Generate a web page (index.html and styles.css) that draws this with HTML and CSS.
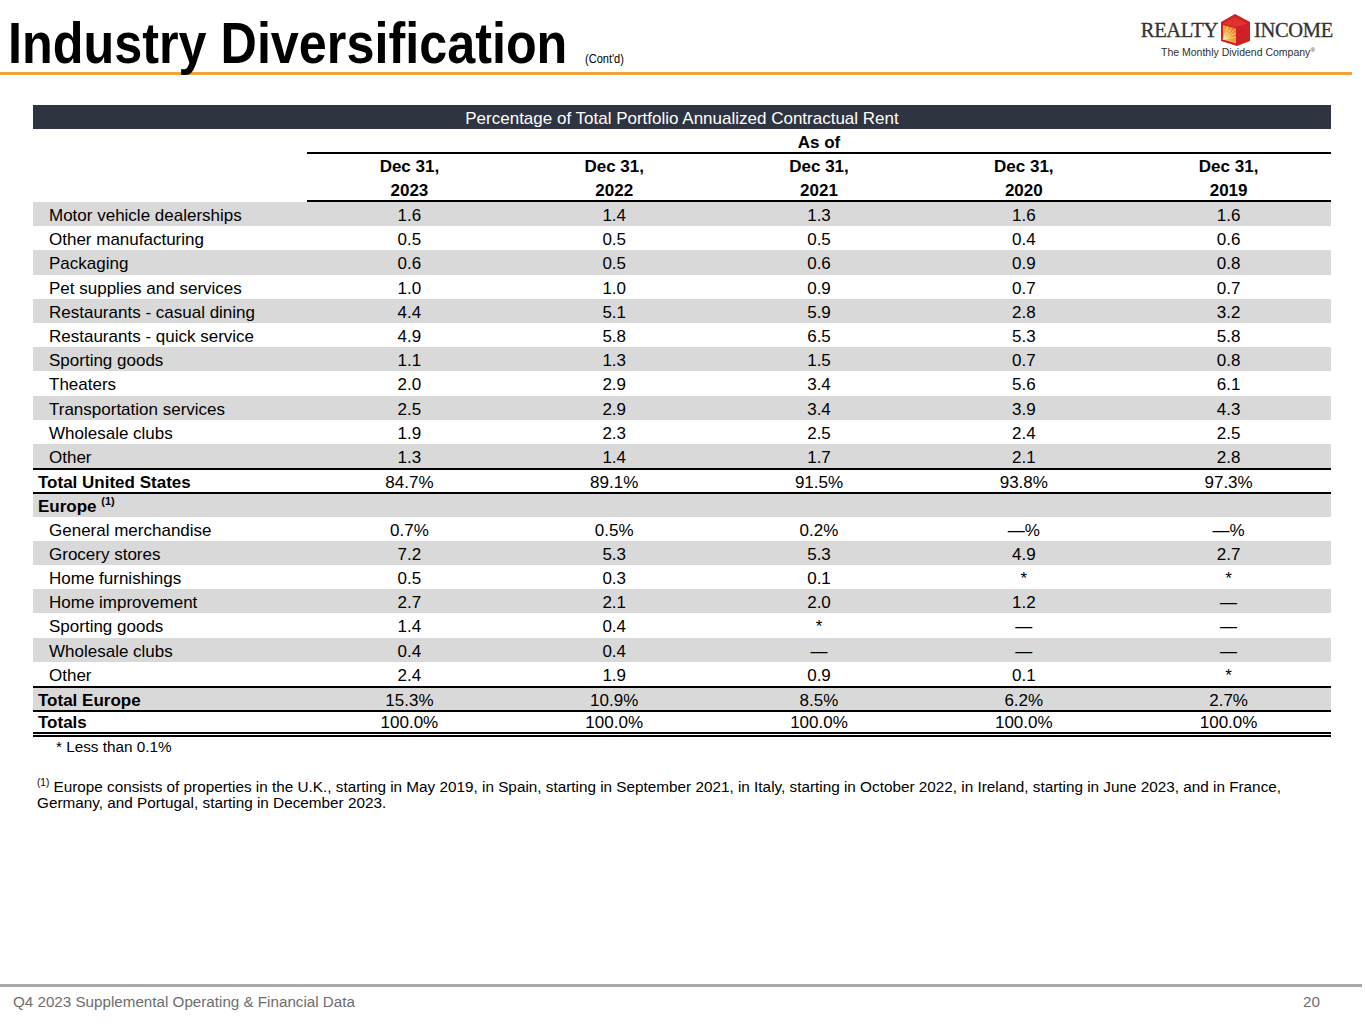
FILE: index.html
```html
<!DOCTYPE html>
<html lang="en">
<head>
<meta charset="utf-8">
<title>Industry Diversification (Cont'd)</title>
<link rel="stylesheet" href="styles.css">
</head>
<body>
<div class="page">
  <header class="top">
    <h1 class="title"><span class="title-text">Industry Diversification</span><span class="contd">(Cont'd)</span></h1>
    <div class="logo">
      <div class="logo-line">
        <span class="logo-word">REALTY</span>
        <svg class="logo-icon" width="30" height="32" viewBox="0 0 30 32" aria-hidden="true">
          <defs>
            <linearGradient id="face" x1="0" y1="1" x2="1" y2="0">
              <stop offset="0" stop-color="#f9d46a"/>
              <stop offset="0.55" stop-color="#f29a2e"/>
              <stop offset="1" stop-color="#e2541f"/>
            </linearGradient>
          </defs>
          <polygon points="15,0 30,8 30,27 17,32 1,27 1,8" fill="#cf2027"/>
          <polygon points="15,3 27,9.5 16,13 3,9.5" fill="#e0332c"/>
          <polygon points="3,11 16,14.5 16,29.5 3,25.5" fill="url(#face)"/>
          <g stroke="#fff3c8" stroke-width="0.7" opacity="0.9">
            <line x1="3" y1="25.5" x2="16" y2="15"/>
            <line x1="3" y1="25.5" x2="16" y2="19"/>
            <line x1="3" y1="25.5" x2="16" y2="23"/>
            <line x1="3" y1="25.5" x2="12" y2="13.5"/>
            <line x1="3" y1="25.5" x2="8" y2="12.5"/>
          </g>
        </svg>
        <span class="logo-word logo-word-right">INCOME</span>
      </div>
      <div class="tagline">The Monthly Dividend Company<sup>®</sup></div>
    </div>
  </header>

  <main class="content">
    <table class="rent">
      <colgroup>
        <col class="c-label">
        <col><col><col><col><col>
      </colgroup>
      <thead>
        <tr class="band"><th colspan="6">Percentage of Total Portfolio Annualized Contractual Rent</th></tr>
        <tr class="asof"><th class="blank"></th><th colspan="5" class="ruled">As of</th></tr>
        <tr class="dec"><th class="blank"></th><th>Dec 31,</th><th>Dec 31,</th><th>Dec 31,</th><th>Dec 31,</th><th>Dec 31,</th></tr>
        <tr class="yr"><th class="blank"></th><th>2023</th><th>2022</th><th>2021</th><th>2020</th><th>2019</th></tr>
      </thead>
      <tbody>
        <tr class="g"><td class="lbl">Motor vehicle dealerships</td><td>1.6</td><td>1.4</td><td>1.3</td><td>1.6</td><td>1.6</td></tr>
        <tr><td class="lbl">Other manufacturing</td><td>0.5</td><td>0.5</td><td>0.5</td><td>0.4</td><td>0.6</td></tr>
        <tr class="g"><td class="lbl">Packaging</td><td>0.6</td><td>0.5</td><td>0.6</td><td>0.9</td><td>0.8</td></tr>
        <tr><td class="lbl">Pet supplies and services</td><td>1.0</td><td>1.0</td><td>0.9</td><td>0.7</td><td>0.7</td></tr>
        <tr class="g"><td class="lbl">Restaurants - casual dining</td><td>4.4</td><td>5.1</td><td>5.9</td><td>2.8</td><td>3.2</td></tr>
        <tr><td class="lbl">Restaurants - quick service</td><td>4.9</td><td>5.8</td><td>6.5</td><td>5.3</td><td>5.8</td></tr>
        <tr class="g"><td class="lbl">Sporting goods</td><td>1.1</td><td>1.3</td><td>1.5</td><td>0.7</td><td>0.8</td></tr>
        <tr><td class="lbl">Theaters</td><td>2.0</td><td>2.9</td><td>3.4</td><td>5.6</td><td>6.1</td></tr>
        <tr class="g"><td class="lbl">Transportation services</td><td>2.5</td><td>2.9</td><td>3.4</td><td>3.9</td><td>4.3</td></tr>
        <tr><td class="lbl">Wholesale clubs</td><td>1.9</td><td>2.3</td><td>2.5</td><td>2.4</td><td>2.5</td></tr>
        <tr class="g"><td class="lbl">Other</td><td>1.3</td><td>1.4</td><td>1.7</td><td>2.1</td><td>2.8</td></tr>
        <tr class="ruled-top"><td class="lbl strong">Total United States</td><td>84.7%</td><td>89.1%</td><td>91.5%</td><td>93.8%</td><td>97.3%</td></tr>
        <tr class="g ruled-top"><td class="lbl strong">Europe <sup class="fn">(1)</sup></td><td></td><td></td><td></td><td></td><td></td></tr>
        <tr><td class="lbl">General merchandise</td><td>0.7%</td><td>0.5%</td><td>0.2%</td><td>—%</td><td>—%</td></tr>
        <tr class="g"><td class="lbl">Grocery stores</td><td>7.2</td><td>5.3</td><td>5.3</td><td>4.9</td><td>2.7</td></tr>
        <tr><td class="lbl">Home furnishings</td><td>0.5</td><td>0.3</td><td>0.1</td><td>*</td><td>*</td></tr>
        <tr class="g"><td class="lbl">Home improvement</td><td>2.7</td><td>2.1</td><td>2.0</td><td>1.2</td><td>—</td></tr>
        <tr><td class="lbl">Sporting goods</td><td>1.4</td><td>0.4</td><td>*</td><td>—</td><td>—</td></tr>
        <tr class="g"><td class="lbl">Wholesale clubs</td><td>0.4</td><td>0.4</td><td>—</td><td>—</td><td>—</td></tr>
        <tr><td class="lbl">Other</td><td>2.4</td><td>1.9</td><td>0.9</td><td>0.1</td><td>*</td></tr>
        <tr class="g ruled-top"><td class="lbl strong">Total Europe</td><td>15.3%</td><td>10.9%</td><td>8.5%</td><td>6.2%</td><td>2.7%</td></tr>
        <tr class="ruled-top totals"><td class="lbl strong">Totals</td><td>100.0%</td><td>100.0%</td><td>100.0%</td><td>100.0%</td><td>100.0%</td></tr>
      </tbody>
    </table>

    <p class="less">* Less than 0.1%</p>
    <p class="footnote"><sup>(1)</sup> <span>Europe consists of properties in the U.K., starting in May 2019, in Spain, starting in September 2021, in Italy, starting in October 2022, in Ireland, starting in June 2023, and in France,</span><br><span>Germany, and Portugal, starting in December 2023.</span></p>
  </main>

  <footer class="bottom">
    <span class="doc">Q4 2023 Supplemental Operating &amp; Financial Data</span>
    <span class="pageno">20</span>
  </footer>
</div>
</body>
</html>
```

FILE: styles.css
```css
* { box-sizing: border-box; }

html, body {
  margin: 0;
  padding: 0;
  background: #fff;
}

body {
  font-family: "Liberation Sans", Arial, sans-serif;
  color: #000;
}

.page {
  width: 1365px;
  min-height: 1024px;
  display: flex;
  flex-direction: column;
}

/* ---------- header ---------- */
.top {
  display: flex;
  justify-content: space-between;
  align-items: flex-start;
  height: 75px;
  margin-right: 13px;
  border-bottom: 3px solid #f4a23c;
  padding: 15px 19px 0 8px;
}

.title {
  margin: 0;
  display: flex;
  align-items: baseline;
  font-family: "Liberation Sans", Arial, sans-serif;
  font-weight: bold;
  font-size: 57px;
  line-height: 57px;
  white-space: nowrap;
}

.title-text {
  display: inline-block;
  width: 559px;
  transform: scaleX(0.883);
  transform-origin: left center;
}

.contd {
  font-size: 12px;
  font-weight: normal;
  margin-left: 18px;
  transform: scaleX(0.92);
  transform-origin: left center;
  display: inline-block;
}

.logo {
  margin-top: -1px;
  display: flex;
  flex-direction: column;
  align-items: center;
}

.logo-line {
  display: flex;
  align-items: center;
}

.logo-word {
  font-family: "Liberation Serif", "Times New Roman", serif;
  font-size: 20.5px;
  color: #333;
  letter-spacing: -0.3px;
  line-height: 32px;
  -webkit-text-stroke: 0.3px #333;
}

.logo-icon {
  display: block;
  margin: 0 4px 0 2px;
}

.tagline {
  font-family: "Liberation Sans", Arial, sans-serif;
  font-size: 10.5px;
  color: #2f2f2f;
  margin-top: -2px;
  margin-left: 2px;
  line-height: 12px;
}

.tagline sup {
  font-size: 6px;
  vertical-align: 4px;
}

/* ---------- table ---------- */
.content {
  padding: 30px 0 0 33px;
}

.rent {
  width: 1298px;
  table-layout: fixed;
  border-collapse: separate;
  border-spacing: 0;
  font-size: 17px;
}

.c-label { width: 274px; }

.rent th,
.rent td {
  padding: 3px 0 0;
  text-align: center;
  vertical-align: top;
  line-height: 21.2px;
  white-space: nowrap;
}

.band th {
  background: #2e3440;
  color: #fff;
  font-weight: normal;
  padding-top: 3px;
  line-height: 21px;
}

.asof th {
  font-weight: bold;
  padding-top: 4px;
  line-height: 19px;
}

.asof th.ruled {
  border-bottom: 2px solid #000;
}

.dec th {
  padding-top: 2px;
  line-height: 22px;
}

.yr th {
  padding-top: 3px;
  line-height: 19px;
}

.yr th:not(.blank) {
  border-bottom: 2px solid #000;
}

.rent td.lbl {
  text-align: left;
  padding-left: 16px;
}

.rent td.lbl.strong {
  font-weight: bold;
  padding-left: 5px;
}

.g td { background: #d9d9d9; }

.ruled-top td {
  border-top: 2px solid #000;
  line-height: 19.2px;
}

.totals td {
  line-height: 16.5px;
  border-bottom: 5px double #000;
}

sup.fn {
  font-size: 11px;
  vertical-align: 7px;
  line-height: 0;
}

/* ---------- notes ---------- */
.less {
  margin: 1px 0 0 23px;
  font-size: 15.3px;
  line-height: 18px;
}

.footnote {
  margin: 23px 0 0 4px;
  font-size: 15.3px;
  line-height: 16px;
  white-space: nowrap;
}

.footnote sup {
  font-size: 10px;
  vertical-align: 6px;
  line-height: 0;
}

/* ---------- footer ---------- */
.bottom {
  margin-top: auto;
  margin-right: 3px;
  border-top: 3px solid #a9a9a9;
  display: flex;
  justify-content: space-between;
  padding: 6px 42px 14px 13px;
  font-size: 15.2px;
  line-height: 17px;
  color: #6e6e6e;
}
```
